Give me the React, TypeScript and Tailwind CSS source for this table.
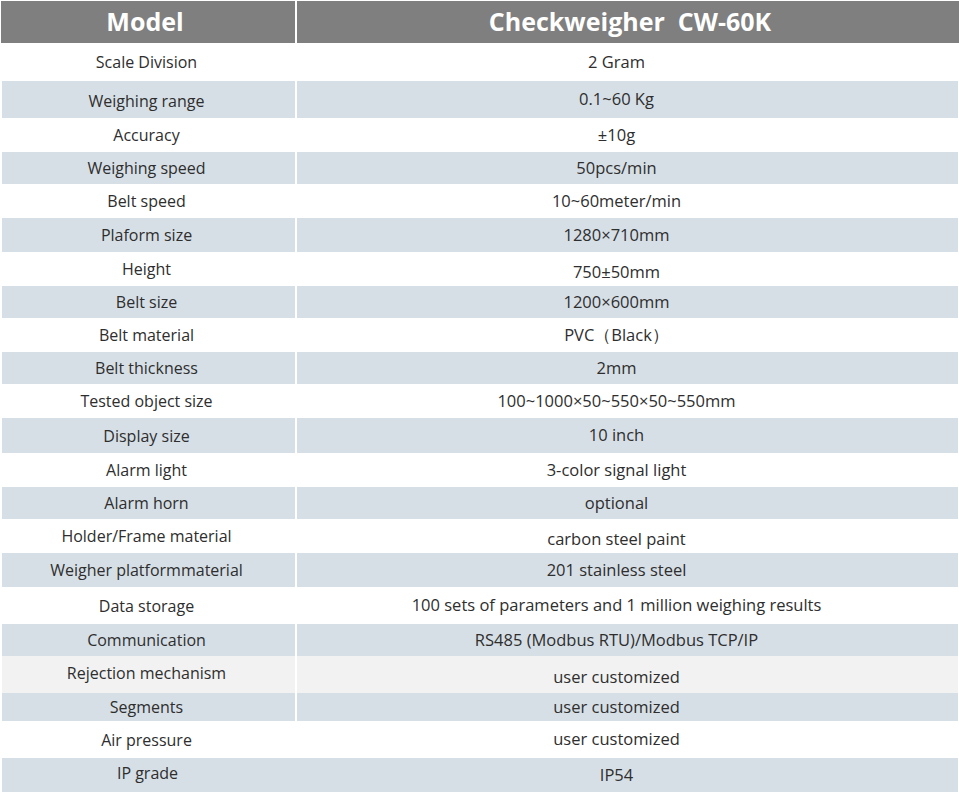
type Row = { label: string; value: string; h: string; bg: string; lc?: string; vc?: string };

const rows: Row[] = [
  { label: "Scale Division", value: "2 Gram", h: "h-[38px]", bg: "bg-white" },
  { label: "Weighing range", value: "0.1~60 Kg", h: "h-[37px]", bg: "bg-[#d7dfe6]", lc: "pt-[3px]" },
  { label: "Accuracy", value: "±10g", h: "h-[34px]", bg: "bg-white" },
  { label: "Weighing speed", value: "50pcs/min", h: "h-[32px]", bg: "bg-[#d7dfe6]" },
  { label: "Belt speed", value: "10~60meter/min", h: "h-[34px]", bg: "bg-white" },
  { label: "Plaform size", value: "1280×710mm", h: "h-[34px]", bg: "bg-[#d7dfe6]" },
  { label: "Height", value: "750±50mm", h: "h-[34px]", bg: "bg-white", vc: "pt-[6px]", lc: "pb-[1px]" },
  { label: "Belt size", value: "1200×600mm", h: "h-[32px]", bg: "bg-[#d7dfe6]" },
  { label: "Belt material", value: "PVC（Black）", h: "h-[34px]", bg: "bg-white" },
  { label: "Belt thickness", value: "2mm", h: "h-[32px]", bg: "bg-[#d7dfe6]" },
  { label: "Tested object size", value: "100~1000×50~550×50~550mm", h: "h-[34px]", bg: "bg-white" },
  { label: "Display size", value: "10 inch", h: "h-[35px]", bg: "bg-[#d7dfe6]" },
  { label: "Alarm light", value: "3-color signal light", h: "h-[34px]", bg: "bg-white" },
  { label: "Alarm horn", value: "optional", h: "h-[32px]", bg: "bg-[#d7dfe6]" },
  { label: "Holder/Frame material", value: "carbon steel paint", h: "h-[34px]", bg: "bg-white", vc: "pt-[6px]" },
  { label: "Weigher platformmaterial", value: "201 stainless steel", h: "h-[34px]", bg: "bg-[#d7dfe6]" },
  { label: "Data storage", value: "100 sets of parameters and 1 million weighing results", h: "h-[37px]", bg: "bg-white" },
  { label: "Communication", value: "RS485 (Modbus RTU)/Modbus TCP/IP", h: "h-[32px]", bg: "bg-[#d7dfe6]" },
  { label: "Rejection mechanism", value: "user customized", h: "h-[37px]", bg: "bg-[#f2f2f2]", lc: "pb-[4px]", vc: "pt-[5px]" },
  { label: "Segments", value: "user customized", h: "h-[28px]", bg: "bg-[#d7dfe6]" },
  { label: "Air pressure", value: "user customized", h: "h-[37px]", bg: "bg-white" },
  { label: "IP grade", value: "IP54", h: "h-[34px]", bg: "bg-[#d7dfe6]", lc: "pb-[4px]" },
];

export default function App() {
  return (
    <div className="w-[959px] h-[792px] overflow-hidden bg-white pt-px font-['Open_Sans',sans-serif] text-[#2e2e2e]">
      {/* header */}
      <div className="ml-px flex h-[42px] bg-[#7f7f7f] text-white font-bold text-[25px]">
        <div className="flex w-[296px] items-center justify-center border-r-2 border-white pr-[6px]">Model</div>
        <div className="flex flex-1 items-center justify-center pl-[4px]">Checkweigher&nbsp;&nbsp;CW-60K</div>
      </div>
      {rows.map((r, i) => (
        <div key={r.label} className={`ml-[2px] mr-px flex ${r.h} ${r.bg}`}>
          <div
            className={`flex w-[295px] items-center justify-center pr-[4px] text-[16px] ${r.lc ?? ""} ${
              i < rows.length - 1 ? "border-r-2 border-white" : ""
            }`}
          >
            {r.label}
          </div>
          <div className={`flex flex-1 items-center justify-center pr-[22px] text-[16.5px] ${r.vc ?? ""}`}>
            {r.value}
          </div>
        </div>
      ))}
    </div>
  );
}
